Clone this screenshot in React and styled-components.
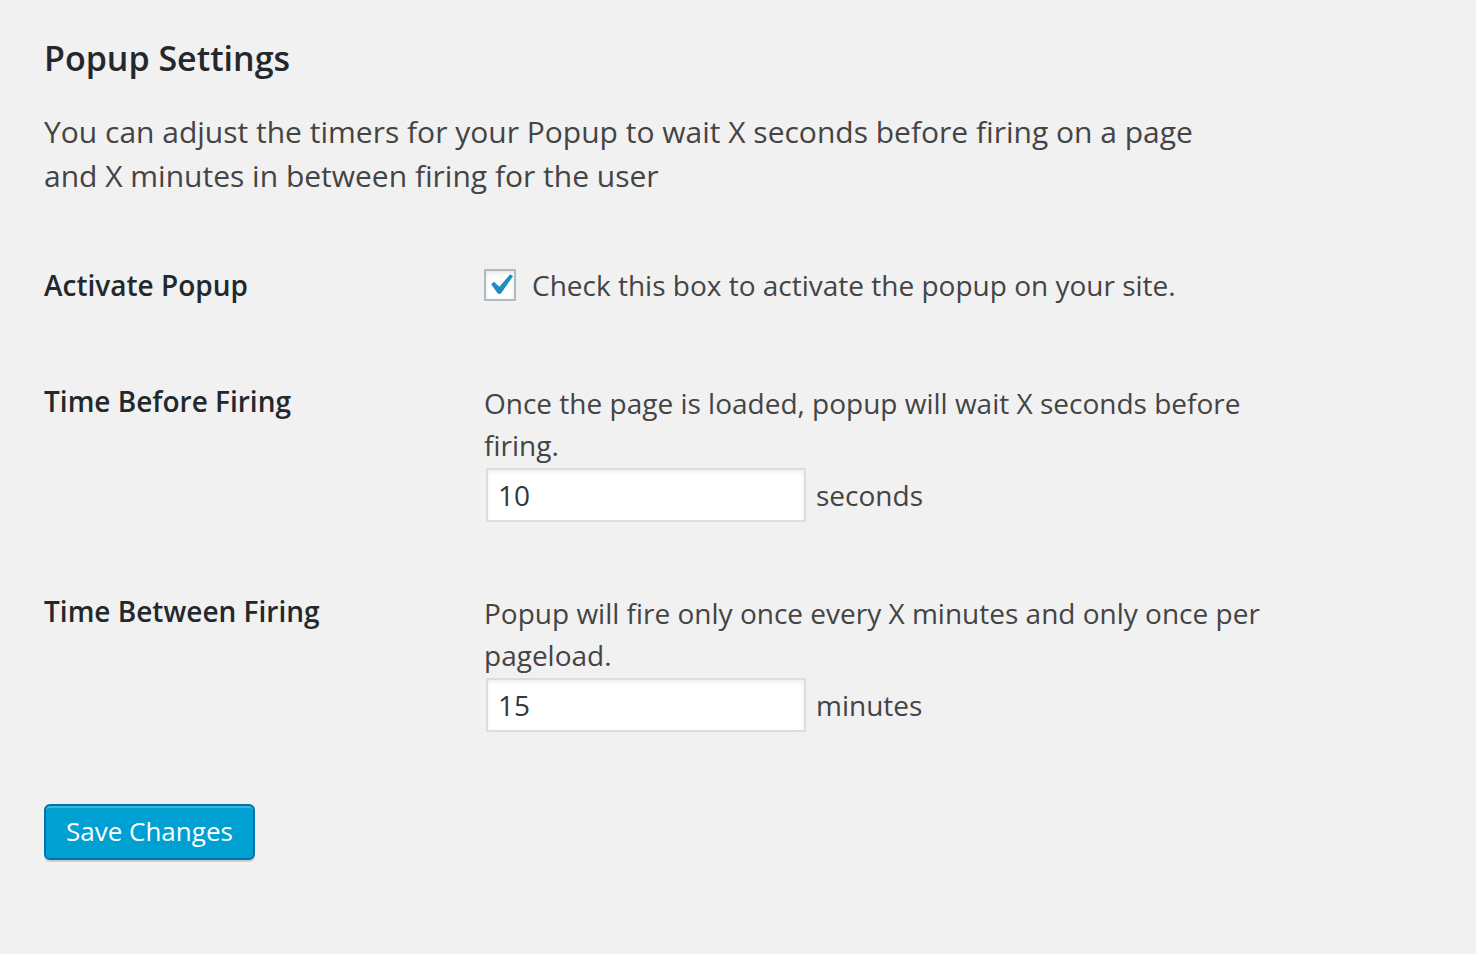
import styled, { createGlobalStyle } from 'styled-components';

const GlobalStyle = createGlobalStyle`
  html, body {
    margin: 0;
    padding: 0;
    background: #f1f1f1;
  }
  body {
    font-family: 'Open Sans', 'Noto Sans', sans-serif;
    color: #444;
  }
`;

const Wrap = styled.div`
  padding: 36px 44px 60px;
  min-height: 954px;
  box-sizing: border-box;
`;

const Title = styled.h2`
  margin: 0;
  font-size: 34px;
  line-height: 44px;
  font-weight: 600;
  color: #23282d;
`;

const Intro = styled.p`
  margin: 30px 0 0;
  font-size: 30px;
  line-height: 44px;
  color: #444;
  max-width: 1175px;
`;

const Table = styled.div`
  display: grid;
  grid-template-columns: 440px 1fr;
  margin-top: 66px;
`;

const Label = styled.div`
  font-size: 28px;
  line-height: 42px;
  font-weight: 600;
  color: #23282d;
  margin-top: ${(p) => p.$top || 0}px;
`;

const Field = styled.div`
  font-size: 28px;
  line-height: 42px;
  color: #444;
  margin-top: ${(p) => p.$top || 0}px;
  max-width: 790px;
`;

const CheckRow = styled.label`
  display: flex;
  align-items: center;
  gap: 16px;
`;

const Box = styled.span`
  width: 32px;
  height: 32px;
  flex: none;
  box-sizing: border-box;
  border: 2px solid #b4b9be;
  background: #fff;
  box-shadow: inset 0 2px 4px rgba(0, 0, 0, 0.1);
  display: flex;
  align-items: center;
  justify-content: center;
  overflow: visible;
`;

const Desc = styled.p`
  margin: 2px 0 0;
`;

const InputRow = styled.div`
  display: flex;
  align-items: center;
  gap: 10px;
  margin-top: 2px;
`;

const NumberInput = styled.input`
  width: 320px;
  height: 54px;
  box-sizing: border-box;
  margin: 0 0 0 2px;
  padding: 0 10px;
  border: 2px solid #ddd;
  background: #fff;
  box-shadow: inset 0 2px 4px rgba(0, 0, 0, 0.07);
  font-family: 'Open Sans', 'Noto Sans', sans-serif;
  font-size: 28px;
  color: #32373c;
  outline: none;
`;

const Unit = styled.span`
  font-size: 28px;
  color: #444;
`;

const SaveButton = styled.button`
  margin-top: 72px;
  height: 56px;
  padding: 0 20px 2px;
  background: #00a0d2;
  border: 2px solid #0073aa;
  border-radius: 6px;
  box-shadow: inset 0 2px 0 rgba(120, 200, 230, 0.5), 0 2px 0 rgba(0, 0, 0, 0.15);
  color: #fff;
  font-family: 'Open Sans', 'Noto Sans', sans-serif;
  font-size: 26px;
  cursor: pointer;
`;

function Check() {
  return (
    <svg width="42" height="42" viewBox="0 0 20 20" style={{ flex: 'none' }}>
      <path d="M14.83 4.89l1.34.94-5.81 8.38H9.02L5.78 9.67l1.34-1.25 2.57 2.4z" fill="#1e8cbe" />
    </svg>
  );
}

export default function App() {
  return (
    <>
      <GlobalStyle />
      <Wrap>
        <Title>Popup Settings</Title>
        <Intro>
          You can adjust the timers for your Popup to wait X seconds before firing on a page
          and X minutes in between firing for the user
        </Intro>
        <Table>
          <Label>Activate Popup</Label>
          <Field>
            <CheckRow>
              <Box>
                <Check />
              </Box>
              Check this box to activate the popup on your site.
            </CheckRow>
          </Field>

          <Label $top={74}>Time Before Firing</Label>
          <Field $top={74}>
            <Desc>Once the page is loaded, popup will wait X seconds before firing.</Desc>
            <InputRow>
              <NumberInput defaultValue="10" />
              <Unit>seconds</Unit>
            </InputRow>
          </Field>

          <Label $top={68}>Time Between Firing</Label>
          <Field $top={68}>
            <Desc>Popup will fire only once every X minutes and only once per pageload.</Desc>
            <InputRow>
              <NumberInput defaultValue="15" />
              <Unit>minutes</Unit>
            </InputRow>
          </Field>
        </Table>
        <SaveButton>Save Changes</SaveButton>
      </Wrap>
    </>
  );
}
